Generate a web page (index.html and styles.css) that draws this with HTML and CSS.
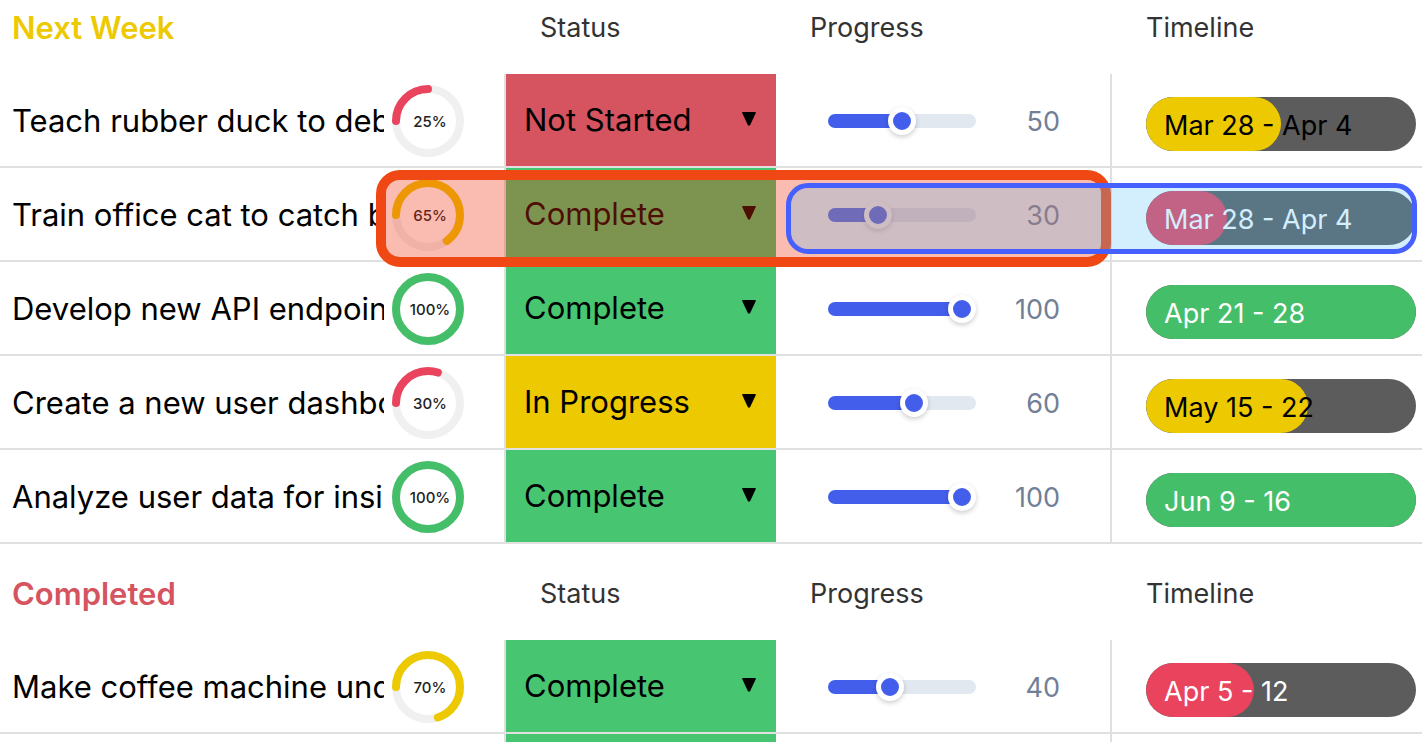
FILE: index.html
```html
<!DOCTYPE html>
<html lang="en">
<head>
<meta charset="utf-8">
<title>Task board</title>
<link rel="stylesheet" href="styles.css">
</head>
<body>
<main class="board" id="board"></main>
<script src="board.js"></script>
</body>
</html>
```
FILE: board.js
```js
const groups = [
  { title: "Next Week", tone: "yellow", tasks: [
    { name: "Teach rubber duck to debug", done: 25, ring: "red", status: "Not Started", progress: 50, dates: "Mar 28 - Apr 4", bar: "yellow" },
    { name: "Train office cat to catch bugs", done: 65, ring: "yellow", status: "Complete", progress: 30, dates: "Mar 28 - Apr 4", bar: "red" },
    { name: "Develop new API endpoints", done: 100, ring: "green", status: "Complete", progress: 100, dates: "Apr 21 - 28", bar: "green" },
    { name: "Create a new user dashboard", done: 30, ring: "red", status: "In Progress", progress: 60, dates: "May 15 - 22", bar: "yellow" },
    { name: "Analyze user data for insights", done: 100, ring: "green", status: "Complete", progress: 100, dates: "Jun 9 - 16", bar: "green" }
  ]},
  { title: "Completed", tone: "brick", tasks: [
    { name: "Make coffee machine understand", done: 70, ring: "yellow", status: "Complete", progress: 40, dates: "Apr 5 - 12", bar: "red" },
    null
  ]}
];
const tones = { "Not Started": "brick", "In Progress": "yellow", "Complete": "green" };

const ring = (value, tone) => `
  <svg class="ring" viewBox="0 0 72 72" role="img" aria-label="${value}%">
    <circle class="ring-track" cx="36" cy="36" r="32"/>
    <circle class="ring-value ring-${tone}" cx="36" cy="36" r="32" pathLength="100" stroke-dasharray="${value} 100" transform="rotate(180 36 36)"/>
    <text class="ring-text" x="38" y="42">${value}%</text>
  </svg>`;

const row = (task) => task ? `
  <tr>
    <td class="cell-name"><div class="name"><span class="name-text">${task.name}</span>${ring(task.done, task.ring)}</div></td>
    <td class="cell-status status-${tones[task.status]}"><div class="status">
      <select class="status-select" aria-label="Status of ${task.name}">
        ${Object.keys(tones).map(s => `<option${s === task.status ? " selected" : ""}>${s}</option>`).join("")}
      </select>
      <svg class="caret" viewBox="0 0 14 14" aria-hidden="true"><path d="M1 0H13Q14.200 0 13.800 1L8.200 13Q7 14.600 5.800 13L.2 1Q-.2 0 1 0Z"/></svg>
    </div></td>
    <td class="cell-progress"><div class="progress">
      <input class="slider" type="range" min="0" max="100" value="${task.progress}" style="--value:${task.progress}" aria-label="Progress of ${task.name}">
      <output class="progress-value">${task.progress}</output>
    </div></td>
    <td class="cell-timeline"><div class="pill pill-${task.bar}">
      <div class="pill-fill" style="width:${task.progress}%"></div><span class="pill-text">${task.dates}</span>
    </div></td>
  </tr>` : `
  <tr><td class="cell-name"></td><td class="cell-status status-green"></td><td class="cell-progress"></td><td class="cell-timeline"></td></tr>`;

document.getElementById("board").innerHTML = groups.map(g => `
  <table class="group">
    <thead><tr>
      <th class="group-title title-${g.tone}" scope="col">${g.title}</th>
      <th class="col-status" scope="col">Status</th>
      <th class="col-progress" scope="col">Progress</th>
      <th class="col-timeline" scope="col">Timeline</th>
    </tr></thead>
    <tbody>${g.tasks.map(row).join("")}</tbody>
  </table>`).join("") + `
  <div class="mark mark-orange"></div>
  <div class="mark mark-blue"></div>`;

document.querySelectorAll(".slider").forEach(s => s.addEventListener("input", () => {
  s.style.setProperty("--value", s.value);
  s.nextElementSibling.value = s.value;
}));
```
FILE: styles.css
```css
* { box-sizing: border-box; }
body {
  margin: 0;
  background: #fff;
  color: #000;
  font-family: Inter, "Liberation Sans", sans-serif;
}
.board {
  position: relative;
  height: 100vh;
  overflow: hidden;
}
.group {
  width: 100%;
  table-layout: fixed;
  border-collapse: separate;
  border-spacing: 0;
}
.group + .group { margin-top: 22px; }

th {
  height: 74px;
  padding: 0 0 20px 34px;
  text-align: left;
  font-size: 27px;
  font-weight: 400;
  color: #333;
}
.group-title {
  padding-left: 12px;
  font-size: 31px;
  font-weight: 600;
}
.title-yellow { color: #edc902; }
.title-brick { color: #d5545f; }
.col-status { width: 270px; }
.col-progress { width: 336px; }
.col-timeline { width: 310px; }

td {
  height: 94px;
  padding: 0;
  border-bottom: 2px solid #e0e0e0;
}
.cell-name, .cell-progress { border-right: 2px solid #e0e0e0; }

.name {
  display: flex;
  align-items: center;
  gap: 8px;
  padding: 2px 40px 0 12px;
}
.name-text {
  flex: 1;
  min-width: 0;
  overflow: hidden;
  white-space: nowrap;
  font-size: 31px;
  line-height: 40px;
}
.ring { flex: none; width: 72px; height: 72px; }
.ring circle { fill: none; stroke-width: 8; stroke-linecap: round; }
.ring .ring-track { stroke: #f0f0f0; }
.ring .ring-red { stroke: #e9435e; }
.ring .ring-yellow { stroke: #edc902; }
.ring .ring-green { stroke: #45be69; }
.ring-text {
  font-size: 15px;
  font-weight: 500;
  text-anchor: middle;
  fill: #222;
}

.status-brick { background: #d5545f; }
.status-yellow { background: #edc902; }
.status-green { background: #48c571; }
.status {
  display: flex;
  align-items: center;
  padding: 0 20px 2px 18px;
}
.status-select {
  flex: 1;
  min-width: 0;
  height: 90px;
  padding: 0;
  border: 0;
  appearance: none;
  background: transparent;
  color: #000;
  font: inherit;
  font-size: 31px;
}
.caret { flex: none; width: 14px; height: 14px; }

.progress {
  display: flex;
  align-items: center;
  justify-content: space-between;
  padding: 2px 50px 0 52px;
}
.slider {
  width: 148px;
  height: 28px;
  margin: 0;
  appearance: none;
  background: transparent;
}
.slider::-webkit-slider-runnable-track {
  height: 14px;
  border-radius: 7px;
  background: linear-gradient(#435eea, #435eea) 0 0 / calc(14px + (100% - 28px) * var(--value) / 100) 100% no-repeat #e2e8f0;
}
.slider::-webkit-slider-thumb {
  appearance: none;
  width: 28px;
  height: 28px;
  margin-top: -7px;
  border: 5px solid #fff;
  border-radius: 50%;
  background: #435eea;
  box-shadow: 0 2px 5px rgba(0, 0, 0, 0.2);
}
.progress-value { font-size: 27px; color: #718096; }

.pill {
  position: relative;
  height: 54px;
  margin: 8px 6px 0 34px;
  border-radius: 27px;
  overflow: hidden;
  background: #5c5c5c;
}
.pill-fill {
  height: 54px;
  border-radius: 27px;
}
.pill-text {
  position: absolute;
  inset: 0;
  padding: 2px 0 0 18px;
  font-size: 27px;
  line-height: 54px;
  white-space: nowrap;
}
.pill-yellow .pill-fill { background: #edc902; }
.pill-red .pill-fill { background: #e9435e; }
.pill-green .pill-fill { background: #45be69; }
.pill-red .pill-text, .pill-green .pill-text { color: #fff; }

.mark { position: absolute; pointer-events: none; }
.mark-orange {
  top: 170px;
  right: 311px;
  width: 735px;
  height: 97px;
  border: 10px solid #ef4815;
  border-radius: 24px;
  background: rgba(240, 46, 12, 0.32) padding-box;
}
.mark-blue {
  top: 183px;
  right: 5px;
  width: 631px;
  height: 71px;
  border: 5px solid #465fff;
  border-radius: 22px;
  background: rgba(86, 193, 250, 0.26) padding-box;
}
```
